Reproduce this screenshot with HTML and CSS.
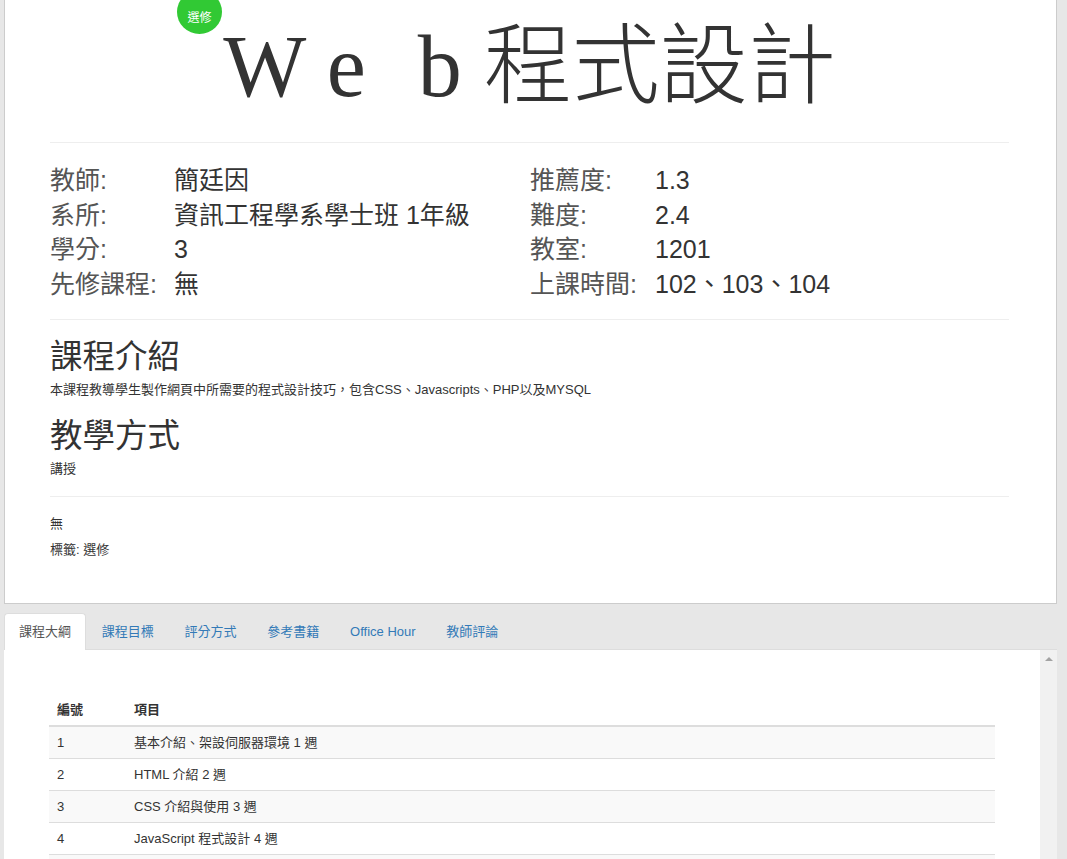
FILE: index.html
```html
<!DOCTYPE html>
<html lang="zh-Hant">
<head>
<meta charset="utf-8">
<title>Web程式設計</title>
<link rel="stylesheet" href="styles.css">
</head>
<body>
<div class="page">
  <section class="card">
    <span class="badge">選修</span>
    <header class="title-wrap">
      <h1 class="title"><span class="latin">W <span class="le">e</span> <span class="lb">b</span></span>程式設計</h1>
    </header>
    <hr class="rule rule-top">
    <div class="info">
      <div class="info-col">
        <div class="row"><span class="label">教師:</span><span class="value">簡廷因</span></div>
        <div class="row"><span class="label">系所:</span><span class="value">資訊工程學系學士班 1年級</span></div>
        <div class="row"><span class="label">學分:</span><span class="value">3</span></div>
        <div class="row"><span class="label">先修課程:</span><span class="value">無</span></div>
      </div>
      <div class="info-col">
        <div class="row"><span class="label">推薦度:</span><span class="value">1.3</span></div>
        <div class="row"><span class="label">難度:</span><span class="value">2.4</span></div>
        <div class="row"><span class="label">教室:</span><span class="value">1201</span></div>
        <div class="row"><span class="label">上課時間:</span><span class="value">102、103、104</span></div>
      </div>
    </div>
    <hr class="rule">
    <div class="desc">
      <h3 class="sec-title">課程介紹</h3>
      <p class="sec-text">本課程教導學生製作網頁中所需要的程式設計技巧，包含CSS、Javascripts、PHP以及MYSQL</p>
      <h3 class="sec-title sec-title-2">教學方式</h3>
      <p class="sec-text">講授</p>
    </div>
    <hr class="rule">
    <div class="meta">
      <p class="meta-line">無</p>
      <p class="meta-line">標籤: 選修</p>
    </div>
  </section>

  <ul class="tabs">
    <li class="tab active">課程大綱</li>
    <li class="tab">課程目標</li>
    <li class="tab">評分方式</li>
    <li class="tab">參考書籍</li>
    <li class="tab">Office Hour</li>
    <li class="tab">教師評論</li>
  </ul>

  <section class="panel">
    <div class="panel-body">
      <table class="syllabus">
        <thead>
          <tr><th class="col-no">編號</th><th>項目</th></tr>
        </thead>
        <tbody>
          <tr><td>1</td><td>基本介紹、架設伺服器環境 1 週</td></tr>
          <tr><td>2</td><td>HTML 介紹 2 週</td></tr>
          <tr><td>3</td><td>CSS 介紹與使用 3 週</td></tr>
          <tr><td>4</td><td>JavaScript 程式設計 4 週</td></tr>
        </tbody>
      </table>
      <div class="next-stripe"></div>
    </div>
    <div class="scrollbar"><span class="arrow"></span></div>
  </section>
</div>
</body>
</html>
```

FILE: styles.css
```css
html, body {
  margin: 0;
  padding: 0;
  overflow: hidden;
}

body {
  background: #e7e7e7;
  font-family: "Liberation Sans", "Noto Sans CJK TC", sans-serif;
  color: #333;
}

.page {
  width: 1053px;
  margin-left: 4px;
}

/* ---------- top card ---------- */
.card {
  position: relative;
  box-sizing: border-box;
  width: 1053px;
  background: #fff;
  border: 1px solid #ccc;
  border-top: 0;
  padding: 0 47px 45px 45px;
}

.badge {
  position: absolute;
  left: 172px;
  top: -10px;
  box-sizing: border-box;
  width: 45px;
  height: 44px;
  padding-top: 8px;
  border-radius: 50%;
  background: #31c934;
  color: #fff;
  font-size: 12px;
  display: flex;
  align-items: center;
  justify-content: center;
}

.title-wrap {
  box-sizing: border-box;
  height: 122px;
  padding-top: 6px;
}

.title {
  margin: 0;
  height: 116px;
  line-height: 122px;
  font-size: 88px;
  font-weight: 300;
  text-align: center;
  white-space: nowrap;
  font-family: "Liberation Serif", "Noto Sans CJK TC", serif;
  color: #333;
}

.title .le {
  margin-right: 30px;
}

.title .lb {
  margin-right: 22px;
}

.rule {
  border: 0;
  border-top: 1px solid #eee;
  margin: 0;
}

.rule-top {
  margin-top: 20px;
}

.info {
  display: grid;
  grid-template-columns: 480px 480px;
  margin: 20px 0 17px;
  font-size: 25px;
  line-height: 34.67px;
}

.row {
  display: flex;
  white-space: nowrap;
}

.label {
  width: 124px;
  flex: none;
  color: #555;
}

.info-col + .info-col .label {
  width: 125px;
}

.value {
  color: #333;
}

.desc {
  padding: 20px 0 19px;
}

.sec-title {
  margin: 0 0 6px;
  font-size: 32.5px;
  font-weight: normal;
  line-height: 35px;
  color: #333;
}

.sec-title-2 {
  margin-top: 21px;
}

.sec-text {
  margin: 0;
  font-size: 13px;
  line-height: 17px;
}

.meta {
  padding-top: 18px;
}

.meta-line {
  margin: 0 0 9px;
  font-size: 13px;
  line-height: 17px;
}

.meta-line:last-child {
  margin-bottom: 0;
}

/* ---------- tabs ---------- */
.tabs {
  display: flex;
  list-style: none;
  margin: 9px 0 0;
  padding: 0;
  height: 36px;
}

.tab {
  position: relative;
  box-sizing: border-box;
  height: 37px;
  padding: 9px 14px 0;
  margin-right: 0.75px;
  border: 1px solid transparent;
  border-bottom: 0;
  border-radius: 4px 4px 0 0;
  font-size: 13px;
  line-height: 17px;
  color: #337ab7;
  white-space: nowrap;
}

.tab.active {
  z-index: 2;
  background: #fff;
  border-color: #ddd;
  color: #555;
}

/* ---------- panel ---------- */
.panel {
  display: flex;
  height: 230px;
  background: #fff;
  border-top: 1px solid #ddd;
}

.panel-body {
  flex: 1;
  padding: 44px 45px 0 45px;
}

.scrollbar {
  width: 17px;
  flex: none;
  background: #f1f1f1;
}

.arrow {
  display: block;
  width: 0;
  height: 0;
  margin: 7px auto 0;
  border-left: 4px solid transparent;
  border-right: 4px solid transparent;
  border-bottom: 4px solid #a3a3a3;
}

.syllabus {
  width: 946px;
  border-collapse: collapse;
  font-size: 13px;
  color: #333;
}

.syllabus th,
.syllabus td {
  padding: 8px;
  line-height: 15px;
  text-align: left;
  border-top: 1px solid #ddd;
}

.syllabus thead th {
  border-top: 0;
  border-bottom: 2px solid #ddd;
  font-weight: bold;
}

.syllabus .col-no {
  width: 61px;
}

.syllabus tbody tr:nth-child(odd) {
  background: #f9f9f9;
}

.syllabus tbody tr:last-child td {
  border-bottom: 1px solid #ddd;
}

.next-stripe {
  width: 946px;
  height: 32px;
  background: #f9f9f9;
}
```
